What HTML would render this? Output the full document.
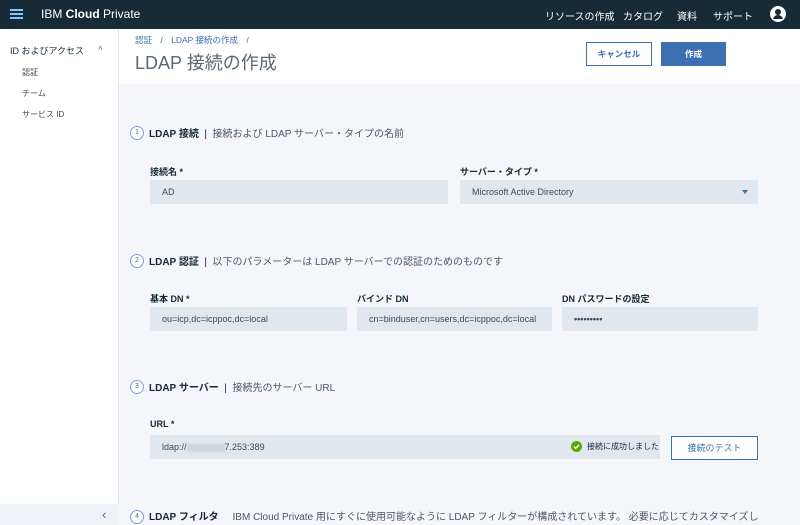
<!DOCTYPE html>
<html><head><meta charset="utf-8"><style>
*{margin:0;padding:0;box-sizing:border-box}
body{width:800px;height:525px;overflow:hidden;font-family:"Liberation Sans","Noto Sans CJK JP",sans-serif;background:#f4f6fa;position:relative;color:#152935}
.a{position:absolute}
.top{left:0;top:0;width:800px;height:29px;background:#172a37}
.side{left:0;top:29px;width:119px;height:496px;background:#fff;border-right:1px solid #dfe3e6}
.hdr{left:119px;top:29px;width:681px;height:55px;background:#fff}
.in{background:#e1e7ef;height:24px;font-size:9px;color:#3d4a55;padding-left:12px;line-height:24px}
.lbl{font-size:9px;font-weight:bold;color:#152935}
.sec{font-size:10px;color:#152935;white-space:nowrap}
.sec b{font-weight:bold}
.sec span{color:#4a5865}
.c{width:14px;height:14px;border:1px solid #7da1d3;border-radius:50%;font-size:7px;text-align:center;line-height:12px;color:#5a6872;background:#fff}
</style></head><body>
<div class="a top"></div>
<div class="a" style="left:10px;top:9px;width:13px;height:2px;background:#7cc7ff;box-shadow:0 4px 0 #7cc7ff,0 8px 0 #7cc7ff"></div>
<div class="a" style="left:41px;top:7px;color:#fff;font-size:12px">IBM <b>Cloud</b> Private</div>
<div class="a" style="left:545px;top:8px;color:#fff;font-size:10px;white-space:nowrap">リソースの作成</div>
<div class="a" style="left:623px;top:8px;color:#fff;font-size:10px">カタログ</div>
<div class="a" style="left:677px;top:8px;color:#fff;font-size:10px">資料</div>
<div class="a" style="left:713px;top:8px;color:#fff;font-size:10px">サポート</div>
<svg class="a" style="left:770px;top:6px" width="16" height="16" viewBox="0 0 16 16"><circle cx="8" cy="8" r="8" fill="#fff"/><circle cx="8" cy="6" r="3" fill="#172a37"/><path d="M3 13c1-3 3-4 5-4s4 1 5 4" fill="#172a37"/></svg>
<div class="a side"></div>
<div class="a" style="left:10px;top:44px;font-size:9px;color:#152935">ID およびアクセス</div>
<div class="a" style="left:98px;top:44px;font-size:8px;color:#3d70b2">˄</div>
<div class="a" style="left:22px;top:67px;font-size:8px;color:#3d4a55">認証</div>
<div class="a" style="left:22px;top:88px;font-size:8px;color:#3d4a55">チーム</div>
<div class="a" style="left:22px;top:109px;font-size:8px;color:#3d4a55">サービス ID</div>
<div class="a" style="left:0;top:504px;width:119px;height:21px;background:#eef2f7"></div>
<div class="a" style="left:102px;top:507px;font-size:13px;color:#3d70b2">‹</div>
<div class="a hdr"></div>
<div class="a" style="left:135px;top:34px;font-size:8.5px;color:#3d70b2;white-space:nowrap">認証 <span style="color:#5a6872;margin:0 6px">/</span> LDAP 接続の作成 <span style="color:#5a6872;margin-left:6px">/</span></div>
<div class="a" style="left:135px;top:49px;font-size:18px;color:#5a6872;white-space:nowrap">LDAP 接続の作成</div>
<div class="a" style="left:586px;top:42px;width:66px;height:24px;border:1px solid #3d70b2;background:#fff;color:#3d70b2;font-size:8.5px;font-weight:bold;text-align:center;line-height:22px">キャンセル</div>
<div class="a" style="left:661px;top:42px;width:65px;height:24px;background:#3d70b2;color:#fff;font-size:8.5px;font-weight:bold;text-align:center;line-height:24px">作成</div>

<div class="a c" style="left:130px;top:126px">1</div>
<div class="a sec" style="left:149px;top:125px"><b>LDAP 接続</b> &nbsp;|&nbsp; <span>接続および LDAP サーバー・タイプの名前</span></div>
<div class="a lbl" style="left:150px;top:165px">接続名 *</div>
<div class="a lbl" style="left:460px;top:165px">サーバー・タイプ *</div>
<div class="a in" style="left:150px;top:180px;width:298px">AD</div>
<div class="a in" style="left:460px;top:180px;width:298px">Microsoft Active Directory</div>
<div class="a" style="left:742px;top:190px;border:3px solid transparent;border-top:4px solid #3d70b2"></div>

<div class="a c" style="left:130px;top:254px">2</div>
<div class="a sec" style="left:149px;top:253px"><b>LDAP 認証</b> &nbsp;|&nbsp; <span>以下のパラメーターは LDAP サーバーでの認証のためのものです</span></div>
<div class="a lbl" style="left:150px;top:292px">基本 DN *</div>
<div class="a lbl" style="left:357px;top:292px">バインド DN</div>
<div class="a lbl" style="left:562px;top:292px">DN パスワードの設定</div>
<div class="a in" style="left:150px;top:307px;width:197px">ou=icp,dc=icppoc,dc=local</div>
<div class="a in" style="left:357px;top:307px;width:195px">cn=binduser,cn=users,dc=icppoc,dc=local</div>
<div class="a in" style="left:562px;top:307px;width:196px;font-weight:bold">•••••••••</div>

<div class="a c" style="left:130px;top:380px">3</div>
<div class="a sec" style="left:149px;top:379px"><b>LDAP サーバー</b> &nbsp;|&nbsp; <span>接続先のサーバー URL</span></div>
<div class="a lbl" style="left:150px;top:419px">URL *</div>
<div class="a in" style="left:150px;top:435px;width:510px">ldap://<span style="display:inline-block;width:38px;height:8px;background:#cfd5dd;vertical-align:middle;filter:blur(1px)"></span>7.253:389</div>
<svg class="a" style="left:571px;top:441px" width="11" height="11" viewBox="0 0 11 11"><circle cx="5.5" cy="5.5" r="5.5" fill="#5aa700"/><path d="M3 5.6l1.7 1.7L8 4" stroke="#fff" stroke-width="1.4" fill="none"/></svg>
<div class="a" style="left:587px;top:441px;font-size:8px;color:#152935;white-space:nowrap">接続に成功しました</div>
<div class="a" style="left:671px;top:436px;width:87px;height:24px;border:1px solid #3d70b2;background:#fff;color:#3d70b2;font-size:9px;text-align:center;line-height:22px">接続のテスト</div>

<div class="a c" style="left:130px;top:510px">4</div>
<div class="a sec" style="left:149px;top:508px"><b>LDAP フィルタ</b> &nbsp;&nbsp;&nbsp; <span>IBM Cloud Private 用にすぐに使用可能なように LDAP フィルターが構成されています。 必要に応じてカスタマイズし</span></div>
</body></html>
